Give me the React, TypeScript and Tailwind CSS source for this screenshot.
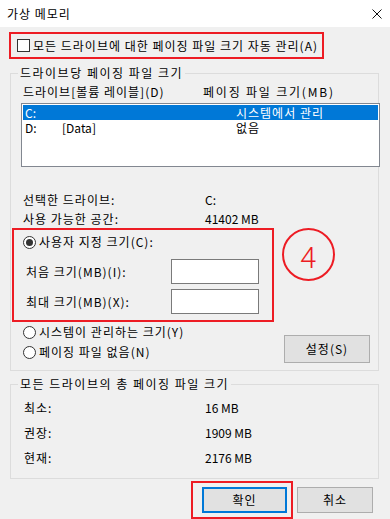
import React from "react";

const RED = "border-[#ed1c24]";

function Radio({ checked }: { checked?: boolean }) {
  return (
    <span className="flex h-[13px] w-[13px] shrink-0 items-center justify-center rounded-full border border-[#333333] bg-white">
      {checked && <span className="h-[7px] w-[7px] rounded-full bg-[#333333]" />}
    </span>
  );
}

function GroupBox({
  title,
  className,
  children,
}: {
  title: string;
  className: string;
  children: React.ReactNode;
}) {
  return (
    <div className={`relative ml-[10px] w-[369px] border border-[#dcdcdc] ${className}`}>
      <span className="absolute -top-[9px] left-[7px] bg-[#f0f0f0] px-[2px] leading-[16px] tracking-[1.5px]">
        {title}
      </span>
      {children}
    </div>
  );
}

export default function App() {
  const totals = [
    { label: "최소:", value: "16 MB" },
    { label: "권장:", value: "1909 MB" },
    { label: "현재:", value: "2176 MB" },
  ];

  return (
    <div
      className="relative flex h-[519px] w-[390px] flex-col overflow-hidden bg-[#f0f0f0] text-[12px] tracking-[1px] text-black"
      style={{ fontFamily: '"Noto Sans CJK KR", "Noto Sans", sans-serif' }}
    >
      {/* title bar */}
      <div className="flex h-[27px] shrink-0 items-center justify-between bg-white">
        <span className="pl-[7px] leading-[16px]">가상 메모리</span>
        <svg className="mr-[8px]" width="10" height="10" viewBox="0 0 10 10">
          <path d="M0.5 0.5 L9.5 9.5 M9.5 0.5 L0.5 9.5" stroke="#111" strokeWidth="1" />
        </svg>
      </div>

      {/* auto manage */}
      <div className={`ml-[9px] mt-[5px] flex h-[27px] w-[315px] shrink-0 items-center border-2 ${RED}`}>
        <span className="ml-[6px] h-[13px] w-[13px] border border-[#333333] bg-white" />
        <span className="ml-[3px] leading-[16px]">모든 드라이브에 대한 페이징 파일 크기 자동 관리(A)</span>
      </div>

      {/* per drive */}
      <GroupBox title="드라이브당 페이징 파일 크기" className="mt-[14px] h-[298px] shrink-0">
        <div className="mt-[10px] flex h-[16px] items-center pl-[12px] leading-[16px]">
          <span className="w-[180px]">드라이브[볼륨 레이블](D)</span>
          <span className="tracking-[1.8px]">페이징 파일 크기(MB)</span>
        </div>

        <div className="relative z-10 ml-[10px] mt-[3px] h-[64px] w-[359px] border border-[#828790] bg-white p-[1px]">
          <div className="flex h-[15px] items-center bg-[#0078d7] pl-[2px] leading-[13px] text-white">
            <span className="w-[211px] tracking-normal">C:</span>
            <span>시스템에서 관리</span>
          </div>
          <div className="flex h-[15px] items-center pl-[2px] leading-[13px]">
            <span className="w-[37px] tracking-normal">D:</span>
            <span className="w-[174px] tracking-normal">[Data]</span>
            <span>없음</span>
          </div>
        </div>

        <div className="mt-[23px] flex h-[19px] items-center pl-[12px] leading-[16px]">
          <span className="w-[182px]">선택한 드라이브:</span>
          <span className="tracking-normal">C:</span>
        </div>
        <div className="flex h-[19px] items-center pl-[12px] leading-[16px]">
          <span className="w-[182px]">사용 가능한 공간:</span>
          <span className="tracking-normal">41402 MB</span>
        </div>

        <div className={`ml-[1px] h-[94px] w-[262px] border-2 ${RED}`}>
          <div className="mt-[4px] flex h-[16px] items-center pl-[9px] leading-[16px]">
            <Radio checked />
            <span className="ml-[3px]">사용자 지정 크기(C):</span>
          </div>
          <div className="mt-[9px] flex h-[25px] items-center pl-[12px] leading-[16px]">
            <span className="w-[145px]">처음 크기(MB)(I):</span>
            <span className="h-[25px] w-[88px] border border-[#7a7a7a] bg-white" />
          </div>
          <div className="mt-[5px] flex h-[25px] items-center pl-[12px] leading-[16px]">
            <span className="w-[145px]">최대 크기(MB)(X):</span>
            <span className="h-[25px] w-[88px] border border-[#7a7a7a] bg-white" />
          </div>
        </div>

        <div className="flex justify-between">
          <div className="flex flex-col pl-[12px]">
            <div className="flex h-[20px] items-center leading-[16px]">
              <Radio />
              <span className="ml-[3px]">시스템이 관리하는 크기(Y)</span>
            </div>
            <div className="flex h-[20px] items-center leading-[16px]">
              <Radio />
              <span className="ml-[3px]">페이징 파일 없음(N)</span>
            </div>
          </div>
          <button className="mr-[8px] mt-[13px] flex h-[28px] w-[86px] items-center justify-center border border-[#adadad] bg-[#e1e1e1] leading-[16px]">
            설정(S)
          </button>
        </div>
      </GroupBox>

      {/* totals */}
      <GroupBox title="모든 드라이브의 총 페이징 파일 크기" className="mt-[13px] h-[95px] shrink-0">
        <div className="mt-[10px]">
          {totals.map((t) => (
            <div key={t.label} className="flex h-[25px] items-center pl-[13px] leading-[16px]">
              <span className="w-[181px]">{t.label}</span>
              <span className="tracking-normal">{t.value}</span>
            </div>
          ))}
        </div>
      </GroupBox>

      {/* buttons */}
      <div className="flex shrink-0">
        <div className={`ml-[191px] mt-[2px] h-[38px] w-[102px] border-2 ${RED}`}>
          <button className="ml-[9px] mt-[4px] flex h-[26px] w-[85px] items-center justify-center border-2 border-[#0078d7] bg-[#e1e1e1] leading-[16px]">
            확인
          </button>
        </div>
        <button className="ml-[4px] mt-[8px] flex h-[26px] w-[76px] items-center justify-center border border-[#adadad] bg-[#e1e1e1] leading-[16px]">
          취소
        </button>
      </div>

      {/* annotation */}
      <div className="absolute left-[282px] top-[228px] flex h-[53px] w-[53px] items-center justify-center rounded-full border-2 border-[#ed1c24]">
        <span className="text-[30px] font-light leading-[30px] tracking-normal text-[#ed1c24]">4</span>
      </div>
    </div>
  );
}
